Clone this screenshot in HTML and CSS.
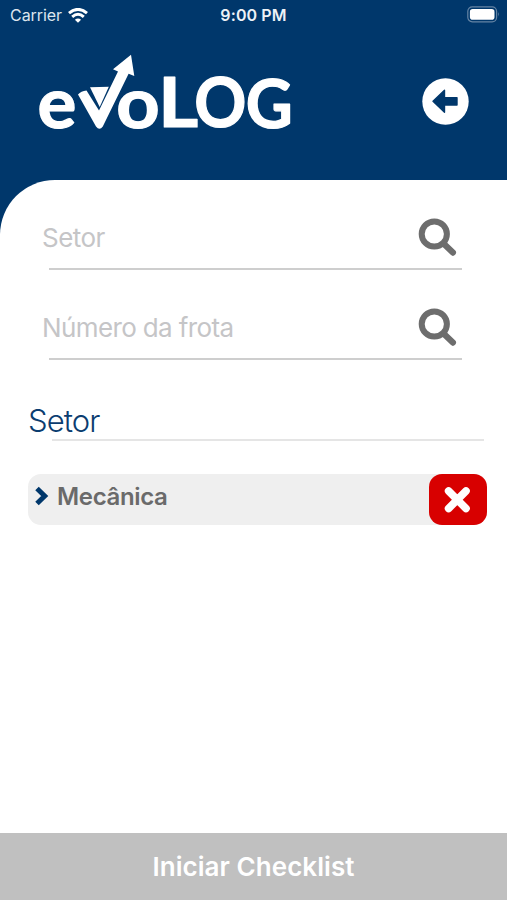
FILE: index.html
```html
<!DOCTYPE html>
<html lang="pt-BR">
<head>
<meta charset="utf-8">
<title>evoLOG</title>
<link rel="stylesheet" href="styles.css">
</head>
<body>
<div class="app">
  <header class="header">
    <div class="status">
      <div class="carrier"><span>Carrier</span>
        <svg width="20" height="15" viewBox="0 0 20 15" fill="none" stroke="#fff" stroke-width="3"><path d="M1 5.2Q10-2.4 19 5.2M4.2 8.8Q10 3.8 15.8 8.8"/><path d="M10 14.8 6.9 11.7Q10 9.2 13.1 11.7Z" fill="#fff" stroke="none"/></svg>
      </div>
      <div class="time">9:00 PM</div>
      <svg class="battery" width="33" height="17" viewBox="0 0 33 17"><rect x=".8" y=".8" width="28.8" height="15" rx="4.5" fill="none" stroke="#6484a4" stroke-width="1.2"/><rect x="2.9" y="2.9" width="24.6" height="10.8" rx="2.8" fill="#fff"/><path d="M31 6q1.8 2.2 0 4.5z" fill="#6484a4"/></svg>
    </div>
    <div class="brand">
      <svg class="logo" width="260" height="80" viewBox="36 53 260 80" fill="#fff">
        <g class="word">
          <text transform="translate(37.4 128) scale(1.04 1)" font-size="70">e</text>
          <text transform="translate(116.3 128) scale(1.08 1)" font-size="70">o</text>
          <text transform="translate(158.3 127) scale(1.13 1)" font-size="68">L</text>
          <text transform="translate(194.2 127) scale(.95 1)" font-size="68">O</text>
          <text transform="translate(245.8 127.8) scale(.96 1)" font-size="67.5">G</text>
        </g>
        <path d="M78 94.5Q81 91 86.5 90.5L99 110.5 118 71.6 113 69.3 131 54.8 134.3 76 128.6 73.8 102.8 126.5Q99.5 131 96 126.5Z"/>
        <path d="M90 87.2 108.8 86.7 99.7 107Z"/>
      </svg>
      <svg class="back" width="47" height="47" viewBox="0 0 47 47"><circle cx="23.5" cy="23.5" r="23.2" fill="#fff"/><path d="M11 23.3 22.5 12.3V19.8H35V27H22.5V34.3Z" fill="#00376b" stroke="#00376b" stroke-width="1.4" stroke-linejoin="round"/></svg>
    </div>
  </header>
  <main class="sheet">
    <div class="field"><span class="hint hint-sector">Setor</span>
      <svg width="40" height="40" viewBox="0 0 40 40" fill="none" stroke="#6d6d6d"><circle cx="16.3" cy="16" r="12.6" stroke-width="6"/><path d="M26 26 34.9 34.6" stroke-width="6.2" stroke-linecap="round"/></svg>
    </div>
    <div class="field"><span class="hint hint-fleet">Número da frota</span>
      <svg width="40" height="40" viewBox="0 0 40 40" fill="none" stroke="#6d6d6d"><circle cx="16.3" cy="16" r="12.6" stroke-width="6"/><path d="M26 26 34.9 34.6" stroke-width="6.2" stroke-linecap="round"/></svg>
    </div>
    <h1 class="title"><span>Setor</span></h1>
    <div class="item">
      <svg class="chevron" width="14" height="20" viewBox="0 0 14 20" fill="none" stroke="#00376b" stroke-width="5"><path d="M2 2.5 9.7 10 2 17.5"/></svg>
      <span class="name">Mecânica</span>
      <div class="remove"><svg width="28" height="28" viewBox="0 0 28 28" stroke="#fff" stroke-width="7.6" stroke-linecap="round"><path d="M4.6 5 22 22.5M22 5 4.6 22.5"/></svg></div>
    </div>
  </main>
  <footer class="start"><span>Iniciar Checklist</span></footer>
</div>
</body>
</html>
```
FILE: styles.css
```css
* { box-sizing: border-box; }
body { margin: 0; font-family: Inter, sans-serif; background: #00376b; }
svg { display: block; flex: none; }
.app { height: 900px; display: flex; flex-direction: column; overflow: hidden; }
.header { height: 179.5px; color: #fff; }
.status { height: 30px; padding: 0 8px 0 10px; display: grid; grid-template-columns: 1fr auto 1fr; align-items: center; font-size: 16px; }
.carrier { display: flex; align-items: center; gap: 6px; color: #dce5ee; letter-spacing: -.05px; }
.time { font-weight: 600; font-size: 16px; letter-spacing: .1px; color: #edf2f7; margin-left: -2px; }
.battery { justify-self: end; margin-right: -1px; margin-top: -2px; }
.brand { display: flex; justify-content: space-between; padding: 23px 38px 0 36px; }
.logo { overflow: visible; }
.back { margin-top: 25px; }
.word { font-family: Lato, sans-serif; font-weight: 700; stroke: #fff; stroke-width: 1.2; stroke-linejoin: round; }
.sheet { flex: 1; background: #fff; border-top-left-radius: 55px 55px; padding: 34.5px 20px 0 28px; }
.field { height: 56px; margin: 0 24px 34px 14px; padding: 0 3px 10px 0; display: flex; justify-content: space-between; align-items: flex-start; background: linear-gradient(#cecece, #cecece) 7px 54px / calc(100% - 8px) 2px no-repeat; }
.field svg { margin-top: 4px; margin-right: 2px; }
.hint { color: #c5c5c7; font-size: 26px; line-height: 48px; white-space: nowrap; }
.hint-sector { letter-spacing: -.55px; }
.hint-fleet { letter-spacing: -.62px; }
.title { height: 47px; margin: 0 3px 0 0; color: #0b3d70; font-size: 31px; font-weight: 300; line-height: 53px; letter-spacing: -.9px; background: linear-gradient(#e5e5e5, #e5e5e5) 24px 45px / calc(100% - 24px) 2px no-repeat; }
.item { height: 51px; margin-top: 33px; border-radius: 13px; background: #efefef; display: flex; align-items: flex-start; padding-left: 7px; }
.chevron { margin-top: 12px; }
.name { margin-left: 8px; font-size: 24px; font-weight: 600; line-height: 45px; letter-spacing: -.35px; color: #6a6a6a; }
.remove { width: 58px; height: 51px; margin-left: auto; border-radius: 13px; background: #d80000; display: flex; align-items: center; justify-content: center; }
.start { height: 67px; background: #c0c0c0; color: #fff; text-align: center; font-size: 26px; font-weight: 600; line-height: 67px; letter-spacing: .05px; }
```
